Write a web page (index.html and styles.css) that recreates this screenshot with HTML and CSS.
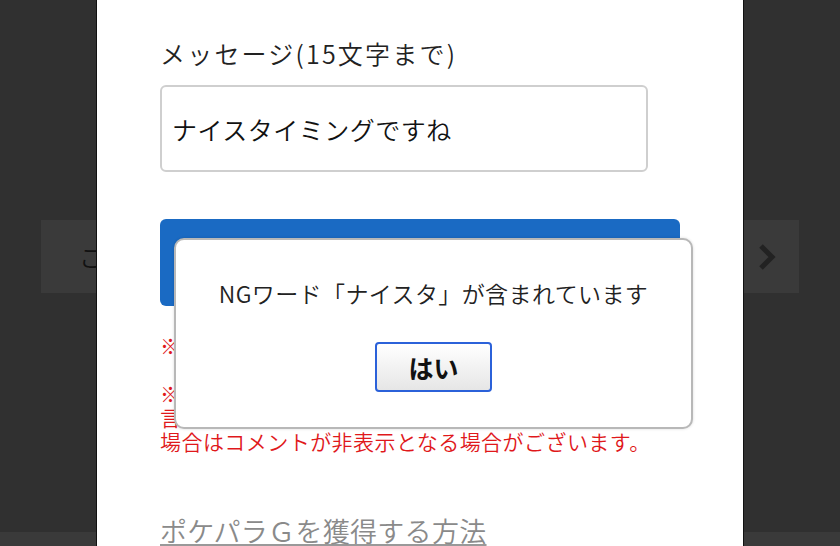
FILE: index.html
```html
<!DOCTYPE html>
<html lang="ja">
<head>
<meta charset="utf-8">
<link rel="stylesheet" href="styles.css">
</head>
<body>
<div class="page">
  <div class="band">
    <span class="band-text">こ</span>
    <svg class="chev" width="20" height="28" viewBox="0 0 20 28"><path d="M4 3 L15 14 L4 25" fill="none" stroke="#222" stroke-width="5"/></svg>
  </div>
  <div class="foot-strip"></div>
</div>

<div class="panel">
  <div class="label">メッセージ(15文字まで)</div>
  <div class="input">ナイスタイミングですね</div>
  <div class="submit"></div>
  <p class="note">※</p>
  <p class="note second">※<br>言<br>場合はコメントが非表示となる場合がございます。</p>
  <a class="how" href="#">ポケパラＧを獲得する方法</a>
</div>

<div class="dialog">
  <div class="dialog-msg">NGワード「ナイスタ」が含まれています</div>
  <button class="ok">はい</button>
</div>
</body>
</html>
```

FILE: styles.css
```css
html, body {
  margin: 0;
  padding: 0;
}
body {
  width: 840px;
  height: 546px;
  overflow: hidden;
  background: #303030;
  font-family: "Noto Sans CJK JP", "Noto Sans", sans-serif;
  font-weight: 350;
  position: relative;
}
.page {
  padding-top: 220px;
  height: 326px;
  display: flex;
  flex-direction: column;
}
.band {
  margin-left: 41px;
  width: 758px;
  height: 73px;
  background: #3a3a3a;
  display: flex;
  align-items: center;
  justify-content: space-between;
  padding: 0 22px 0 38px;
  box-sizing: border-box;
}
.band-text {
  font-size: 24px;
  color: #111;
}
.chev {
  display: block;
}
.foot-strip {
  margin-top: auto;
  height: 14px;
  background: #3a3a3a;
}
.panel {
  position: absolute;
  left: 96px;
  top: 0;
  width: 648px;
  height: 546px;
  background: #fff;
  border-left: 1px solid #111;
  border-right: 1px solid #111;
  padding: 38px 0 0 63px;
  box-sizing: border-box;
}
.label {
  font-size: 25px;
  line-height: 30px;
  letter-spacing: 2.2px;
  color: #222;
}
.input {
  margin-top: 17px;
  width: 488px;
  height: 87px;
  box-sizing: border-box;
  border: 2px solid #cfcfcf;
  border-radius: 6px;
  padding-left: 10px;
  display: flex;
  align-items: center;
  font-size: 25px;
  letter-spacing: 0.5px;
  color: #111;
}
.submit {
  margin-top: 47px;
  width: 520px;
  height: 87px;
  background: #1a6ac3;
  border-radius: 6px;
}
.note {
  margin: 27px 0 0;
  font-size: 21px;
  line-height: 24px;
  letter-spacing: 0.45px;
  color: #e0181b;
}
.note.second {
  margin-top: 24px;
}
.how {
  display: inline-block;
  margin-top: 62px;
  font-size: 27px;
  line-height: 32px;
  letter-spacing: 0.3px;
  color: #8a8a8a;
  text-decoration: underline;
  text-decoration-color: #999;
}
.dialog {
  position: absolute;
  left: 174px;
  top: 238px;
  width: 519px;
  height: 191px;
  box-sizing: border-box;
  background: #fff;
  border: 2px solid #b8b8b8;
  border-radius: 10px;
  box-shadow: 0 0 3px rgba(0,0,0,0.15);
  display: flex;
  flex-direction: column;
  align-items: center;
  padding-top: 37px;
}
.dialog-msg {
  font-size: 23px;
  line-height: 32px;
  letter-spacing: 0.4px;
  color: #222;
}
.ok {
  margin-top: 33px;
  width: 117px;
  height: 50px;
  border: 2px solid #2b61d9;
  border-radius: 4px;
  background: linear-gradient(#ffffff, #e6e6e6);
  font-family: "Noto Sans CJK JP", sans-serif;
  font-weight: bold;
  font-size: 25px;
  color: #111;
  padding: 0;
}
```
